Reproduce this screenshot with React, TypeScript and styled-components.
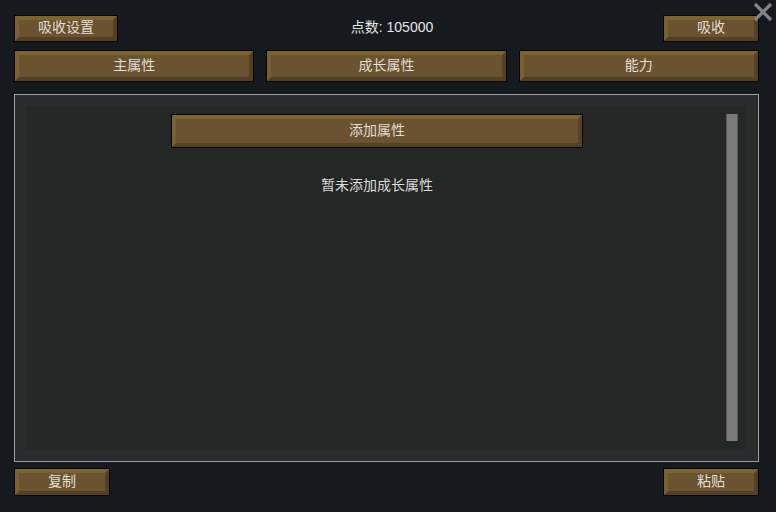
import styled, { createGlobalStyle } from 'styled-components';

const GlobalStyle = createGlobalStyle`
  html, body {
    margin: 0;
    padding: 0;
    background: #16191e;
  }
  body {
    width: 776px;
    height: 512px;
    overflow: hidden;
    font-family: "Liberation Sans", "Noto Sans CJK SC", sans-serif;
    color: #e2e2e2;
  }
`

const Window = styled.div`
  position: relative;
  width: 776px;
  height: 512px;
`
const Container = styled.div`
  width: 745px;
  margin-left: 14px;
  padding-top: 15px;
  display: flex;
  flex-direction: column;
`
const TopRow = styled.div`
  display: flex;
  justify-content: space-between;
  align-items: center;
  height: 27px;
`
const Points = styled.span`
  font-size: 14px;
  line-height: 1;
  color: #e6e6e6;
  margin-left: 3px;
  padding-bottom: 4px;
`
const TabRow = styled.div`
  display: grid;
  grid-template-columns: repeat(3, 1fr);
  gap: 12px;
  margin-top: 8px;
`
const Button = styled.button<{ $w?: number; $h: number }>`
  width: ${props => props.$w ? `${props.$w}px` : '100%'};
  height: ${props => props.$h}px;
  box-sizing: border-box;
  padding: 0;
  border: 1px solid #050505;
  background: #050505;
  cursor: pointer;
  font-family: "Noto Sans CJK SC", "Liberation Sans", sans-serif;
  font-size: 14px;
  line-height: 1;
  color: #e2ded6;
  display: flex;
  span {
    flex: 1;
    display: flex;
    align-items: center;
    justify-content: center;
    background: #6a5330;
    border-style: solid;
    border-width: 4px;
    border-color: #7c6333 #553f25 #553f25 #7a6132;
    padding-bottom: 5px;
  }
`
const Panel = styled.div`
  margin-top: 12px;
  height: 368px;
  box-sizing: border-box;
  border: 1px solid #9c9c9c;
  background: #2a2b2c;
  padding: 11px 12px 11px 11px;
  display: flex;
`
const Inner = styled.div`
  flex: 1;
  background: #252626;
  display: flex;
`
const Content = styled.div`
  flex: 1;
  padding: 8px 0 0 2px;
  display: flex;
  flex-direction: column;
  align-items: center;
`
const Empty = styled.div`
  margin-top: 29px;
  font-family: "Noto Sans CJK SC", sans-serif;
  font-size: 14px;
  line-height: 1;
  color: #dcdcdc;
`
const Scrollbar = styled.div`
  width: 12px;
  margin: 8px 8px 9px 0;
  box-sizing: border-box;
  background: #7a7a7a;
  border-left: 1px solid #5a5a5a;
  border-right: 1px solid #5a5a5a;
`
const BottomRow = styled.div`
  display: flex;
  justify-content: space-between;
  margin-top: 6px;
`
const Close = styled.svg`
  position: absolute;
  top: 2px;
  right: 3px;
`

function App() {
  return (
    <Window>
      <GlobalStyle />
      <Container>
        <TopRow>
          <Button $w={104} $h={27}><span>吸收设置</span></Button>
          <Points>点数: 105000</Points>
          <Button $w={96} $h={27}><span>吸收</span></Button>
        </TopRow>
        <TabRow>
          <Button $h={32}><span>主属性</span></Button>
          <Button $h={32}><span>成长属性</span></Button>
          <Button $h={32}><span>能力</span></Button>
        </TabRow>
        <Panel>
          <Inner>
            <Content>
              <Button $w={412} $h={34}><span>添加属性</span></Button>
              <Empty>暂未添加成长属性</Empty>
            </Content>
            <Scrollbar />
          </Inner>
        </Panel>
        <BottomRow>
          <Button $w={96} $h={28}><span>复制</span></Button>
          <Button $w={96} $h={28}><span>粘贴</span></Button>
        </BottomRow>
      </Container>
      <Close width="20" height="20" viewBox="0 0 20 20">
        <path d="M2 2 L18 18 M18 2 L2 18" stroke="#80848a" strokeWidth="3.2" />
      </Close>
    </Window>
  )
}

export default App;
